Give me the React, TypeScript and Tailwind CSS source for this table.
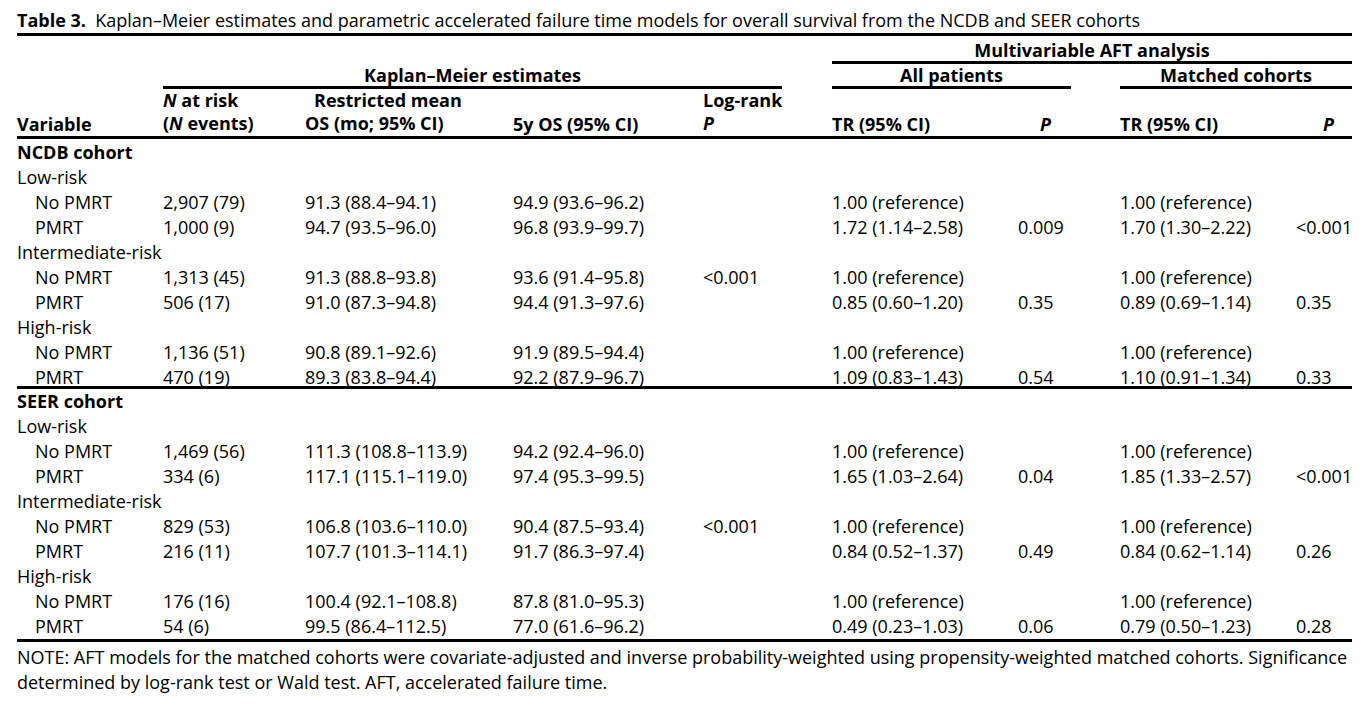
import React from "react";

type Row =
  | { kind: "group"; label: string }
  | { kind: "sub"; label: string }
  | { kind: "data"; cells: string[] };

const COLS = "grid grid-cols-[146px_142px_208px_190px_129px_186px_102px_176px_56px]";

const ncdb: Row[] = [
  { kind: "group", label: "NCDB cohort" },
  { kind: "sub", label: "Low-risk" },
  { kind: "data", cells: ["No PMRT", "2,907 (79)", "91.3 (88.4–94.1)", "94.9 (93.6–96.2)", "", "1.00 (reference)", "", "1.00 (reference)", ""] },
  { kind: "data", cells: ["PMRT", "1,000 (9)", "94.7 (93.5–96.0)", "96.8 (93.9–99.7)", "", "1.72 (1.14–2.58)", "0.009", "1.70 (1.30–2.22)", "<0.001"] },
  { kind: "sub", label: "Intermediate-risk" },
  { kind: "data", cells: ["No PMRT", "1,313 (45)", "91.3 (88.8–93.8)", "93.6 (91.4–95.8)", "<0.001", "1.00 (reference)", "", "1.00 (reference)", ""] },
  { kind: "data", cells: ["PMRT", "506 (17)", "91.0 (87.3–94.8)", "94.4 (91.3–97.6)", "", "0.85 (0.60–1.20)", "0.35", "0.89 (0.69–1.14)", "0.35"] },
  { kind: "sub", label: "High-risk" },
  { kind: "data", cells: ["No PMRT", "1,136 (51)", "90.8 (89.1–92.6)", "91.9 (89.5–94.4)", "", "1.00 (reference)", "", "1.00 (reference)", ""] },
  { kind: "data", cells: ["PMRT", "470 (19)", "89.3 (83.8–94.4)", "92.2 (87.9–96.7)", "", "1.09 (0.83–1.43)", "0.54", "1.10 (0.91–1.34)", "0.33"] },
];

const seer: Row[] = [
  { kind: "group", label: "SEER cohort" },
  { kind: "sub", label: "Low-risk" },
  { kind: "data", cells: ["No PMRT", "1,469 (56)", "111.3 (108.8–113.9)", "94.2 (92.4–96.0)", "", "1.00 (reference)", "", "1.00 (reference)", ""] },
  { kind: "data", cells: ["PMRT", "334 (6)", "117.1 (115.1–119.0)", "97.4 (95.3–99.5)", "", "1.65 (1.03–2.64)", "0.04", "1.85 (1.33–2.57)", "<0.001"] },
  { kind: "sub", label: "Intermediate-risk" },
  { kind: "data", cells: ["No PMRT", "829 (53)", "106.8 (103.6–110.0)", "90.4 (87.5–93.4)", "<0.001", "1.00 (reference)", "", "1.00 (reference)", ""] },
  { kind: "data", cells: ["PMRT", "216 (11)", "107.7 (101.3–114.1)", "91.7 (86.3–97.4)", "", "0.84 (0.52–1.37)", "0.49", "0.84 (0.62–1.14)", "0.26"] },
  { kind: "sub", label: "High-risk" },
  { kind: "data", cells: ["No PMRT", "176 (16)", "100.4 (92.1–108.8)", "87.8 (81.0–95.3)", "", "1.00 (reference)", "", "1.00 (reference)", ""] },
  { kind: "data", cells: ["PMRT", "54 (6)", "99.5 (86.4–112.5)", "77.0 (61.6–96.2)", "", "0.49 (0.23–1.03)", "0.06", "0.79 (0.50–1.23)", "0.28"] },
];

function BodyRow({ row, h }: { row: Row; h: string }) {
  if (row.kind === "group") {
    return <div className={`${h} leading-[25px] font-bold`}>{row.label}</div>;
  }
  if (row.kind === "sub") {
    return <div className={`${h} leading-[25px]`}>{row.label}</div>;
  }
  return (
    <div className={`${COLS} ${h} leading-[25px]`}>
      {row.cells.map((c, i) => (
        <div key={i} className={i === 0 ? "pl-[18px]" : ""}>
          {c}
        </div>
      ))}
    </div>
  );
}

function Block({ rows, className, lastH }: { rows: Row[]; className: string; lastH: string }) {
  return (
    <div className={className}>
      {rows.map((r, i) => (
        <BodyRow key={i} row={r} h={i === rows.length - 1 ? lastH : "h-[25px]"} />
      ))}
    </div>
  );
}

export default function App() {
  return (
    <div
      className="min-h-[706px] w-[1366px] bg-white text-[18px] text-black whitespace-nowrap"
      style={{ fontFamily: '"Open Sans", "Liberation Sans", sans-serif' }}
    >
      <div className="ml-[17px] w-[1335px]">
        {/* Title */}
        <div className="h-[36px] border-b-[3px] border-black pt-[8px] leading-[25px]">
          <span className="font-bold">Table 3.</span>
          {"\u00a0 "}Kaplan–Meier estimates and parametric accelerated failure time models for overall survival from the NCDB and SEER cohorts
        </div>

        {/* Header row 1 */}
        <div className={`${COLS} h-[28px]`}>
          <div className="col-start-6 col-span-4 border-b-[3px] border-black pt-[3px] text-center font-bold leading-[22px]">
            Multivariable AFT analysis
          </div>
        </div>

        {/* Header row 2 */}
        <div className={`${COLS} h-[25px]`}>
          <div className="col-start-2 col-span-4 mr-[50px] border-b-[3px] border-black text-center font-bold leading-[22px]">
            Kaplan–Meier estimates
          </div>
          <div className="col-start-6 col-span-2 mr-[49px] border-b-[3px] border-black text-center font-bold leading-[22px]">
            All patients
          </div>
          <div className="col-start-8 col-span-2 border-b-[3px] border-black text-center font-bold leading-[22px]">
            Matched cohorts
          </div>
        </div>

        {/* Header row 3 */}
        <div className={`${COLS} h-[50px] border-b-[3px] border-black font-bold leading-[23px]`}>
          <div className="flex flex-col justify-end">
            <div>Variable</div>
          </div>
          <div className="flex flex-col">
            <div>
              <i>N</i> at risk
            </div>
            <div>
              (<i>N</i> events)
            </div>
          </div>
          <div className="flex flex-col">
            <div className="pl-[9px]">Restricted mean</div>
            <div>OS (mo; 95% CI)</div>
          </div>
          <div className="flex flex-col justify-end">
            <div>5y OS (95% CI)</div>
          </div>
          <div className="flex flex-col">
            <div>Log-rank</div>
            <div>
              <i>P</i>
            </div>
          </div>
          <div className="flex flex-col justify-end">
            <div>TR (95% CI)</div>
          </div>
          <div className="flex flex-col justify-end pl-[22px]">
            <div>
              <i>P</i>
            </div>
          </div>
          <div className="flex flex-col justify-end">
            <div>TR (95% CI)</div>
          </div>
          <div className="flex flex-col justify-end pl-[27px]">
            <div>
              <i>P</i>
            </div>
          </div>
        </div>

        {/* Body */}
        <Block rows={ncdb} lastH="h-[21px]" className="border-b-[3px] border-black pt-[1px]" />
        <Block rows={seer} lastH="h-[25px]" className="border-b-[3px] border-black" />

        {/* Note */}
        <div className="pt-[3px] leading-[25px]">
          NOTE: AFT models for the matched cohorts were covariate-adjusted and inverse probability-weighted using propensity-weighted matched cohorts. Significance
          <br />
          determined by log-rank test or Wald test. AFT, accelerated failure time.
        </div>
      </div>
    </div>
  );
}
